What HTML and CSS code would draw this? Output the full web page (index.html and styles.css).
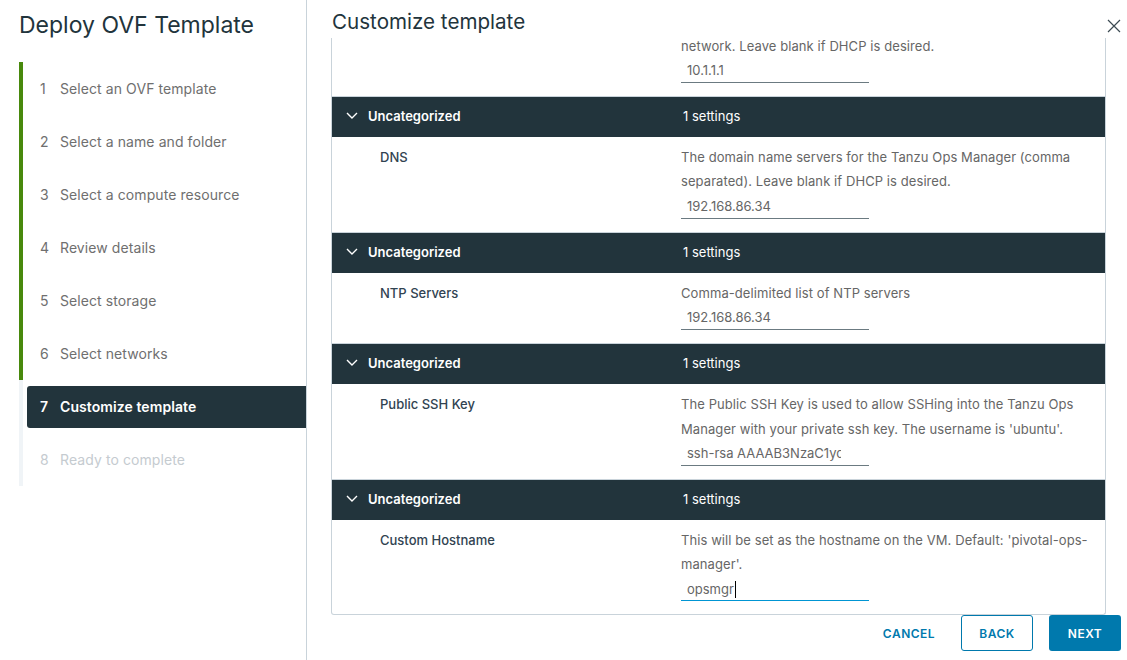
FILE: index.html
```html
<!DOCTYPE html>
<html lang="en">
<head>
  <meta charset="UTF-8">
  <title>Deploy OVF Template</title>
  <link rel="stylesheet" href="styles.css">
</head>
<body>
  <div class="wizard">
    <aside class="wizard-nav">
      <h1 class="wizard-title">Deploy OVF Template</h1>
      <ol class="steps">
        <li class="step step-done"><div class="step-item"><span class="step-num">1</span>Select an OVF template</div></li>
        <li class="step step-done"><div class="step-item"><span class="step-num">2</span>Select a name and folder</div></li>
        <li class="step step-done"><div class="step-item"><span class="step-num">3</span>Select a compute resource</div></li>
        <li class="step step-done"><div class="step-item"><span class="step-num">4</span>Review details</div></li>
        <li class="step step-done"><div class="step-item"><span class="step-num">5</span>Select storage</div></li>
        <li class="step step-done"><div class="step-item"><span class="step-num">6</span>Select networks</div></li>
        <li class="step step-active"><div class="step-item"><span class="step-num">7</span>Customize template</div></li>
        <li class="step step-disabled"><div class="step-item"><span class="step-num">8</span>Ready to complete</div></li>
      </ol>
    </aside>

    <main class="wizard-main">
      <header class="main-head">
        <h2 class="main-title">Customize template</h2>
        <svg class="close-icon" viewBox="0 0 14 14"><path d="M1 1l12 12M13 1L1 13"></path></svg>
      </header>

      <div class="panel">
        <div class="panel-scroll">
          <div class="row row-first">
            <div class="row-label"></div>
            <div class="row-body">
              <p class="row-desc">network. Leave blank if DHCP is desired.</p>
              <div class="field">10.1.1.1</div>
            </div>
          </div>

          <div class="group-head">
            <svg class="chevron" viewBox="0 0 12 8"><path d="M1 1l5 5 5-5"></path></svg>
            <span class="group-name">Uncategorized</span>
            <span class="group-count">1 settings</span>
          </div>
          <div class="row">
            <div class="row-label">DNS</div>
            <div class="row-body">
              <p class="row-desc">The domain name servers for the Tanzu Ops Manager (comma separated). Leave blank if DHCP is desired.</p>
              <div class="field">192.168.86.34</div>
            </div>
          </div>

          <div class="group-head">
            <svg class="chevron" viewBox="0 0 12 8"><path d="M1 1l5 5 5-5"></path></svg>
            <span class="group-name">Uncategorized</span>
            <span class="group-count">1 settings</span>
          </div>
          <div class="row">
            <div class="row-label">NTP Servers</div>
            <div class="row-body">
              <p class="row-desc">Comma-delimited list of NTP servers</p>
              <div class="field">192.168.86.34</div>
            </div>
          </div>

          <div class="group-head">
            <svg class="chevron" viewBox="0 0 12 8"><path d="M1 1l5 5 5-5"></path></svg>
            <span class="group-name">Uncategorized</span>
            <span class="group-count">1 settings</span>
          </div>
          <div class="row">
            <div class="row-label">Public SSH Key</div>
            <div class="row-body">
              <p class="row-desc">The Public SSH Key is used to allow SSHing into the Tanzu Ops Manager with your private ssh key. The username is 'ubuntu'.</p>
              <div class="field"><span class="field-clip">ssh-rsa AAAAB3NzaC1yc</span></div>
            </div>
          </div>

          <div class="group-head">
            <svg class="chevron" viewBox="0 0 12 8"><path d="M1 1l5 5 5-5"></path></svg>
            <span class="group-name">Uncategorized</span>
            <span class="group-count">1 settings</span>
          </div>
          <div class="row">
            <div class="row-label">Custom Hostname</div>
            <div class="row-body">
              <p class="row-desc">This will be set as the hostname on the VM. Default: 'pivotal-ops-manager'.</p>
              <div class="field field-focus">opsmgr<span class="caret"></span></div>
            </div>
          </div>
        </div>
      </div>

      <footer class="main-foot">
        <button class="btn btn-link">CANCEL</button>
        <button class="btn btn-outline">BACK</button>
        <button class="btn btn-solid">NEXT</button>
      </footer>
    </main>
  </div>
</body>
</html>
```

FILE: styles.css
```css
/* === Reset === */
*, *::before, *::after { box-sizing: border-box; }
html, body { height: 100%; }
body {
  background: #fff;
  color: #666;
  font-family: Inter, "Noto Sans", sans-serif;
  font-size: 13px;
  margin: 0;
  overflow: hidden;
}

.wizard {
  display: flex;
  height: 660px;
}

/* === Left nav === */
.wizard-nav {
  border-right: 1px solid #c9d3da;
  flex: 0 0 307px;
  padding-left: 19px;
}
.wizard-title {
  color: #22343c;
  font-size: 23px;
  font-weight: 400;
  line-height: 30px;
  margin: 0 0 22px;
  padding-top: 10px;
}
.steps {
  list-style: none;
  margin: 0;
  padding: 0;
}
.step {
  align-items: center;
  border-left: 4px solid #f0f4f7;
  color: #6f6f6f;
  display: flex;
  font-size: 14px;
  height: 53px;
  letter-spacing: .08px;
  padding-left: 4px;
}
.step-item {
  align-items: center;
  border-radius: 3px 0 0 3px;
  display: flex;
  flex: 1;
  height: 42px;
  margin-top: 1px;
  padding: 0 0 2px 13px;
}
.step-num { width: 20px; }
.step-done { border-left-color: #48890c; }
.step-active { color: #fff; font-weight: 600; }
.step-active .step-item { background: #22343c; }
.step-disabled { color: #c5cbd0; }

/* === Main === */
.wizard-main {
  display: flex;
  flex: 1;
  flex-direction: column;
  min-width: 0;
  padding: 0 6px 0 24px;
}
.main-head {
  align-items: center;
  display: flex;
  height: 38px;
  justify-content: space-between;
  padding-left: 1px;
}
.main-title {
  color: #22343c;
  font-size: 20.6px;
  font-weight: 400;
  margin: 5px 0 0;
}
.close-icon {
  fill: none;
  height: 14px;
  margin-top: 14px;
  stroke: #3c4a52;
  stroke-width: 1.2;
  width: 14px;
}

/* === Settings panel === */
.panel {
  border: 1px solid #c9d3da;
  border-radius: 0 0 3px 3px;
  border-top: 0;
  height: 577px;
  margin-right: 15px;
  overflow: hidden;
}
.panel-scroll { margin-top: -12.4px; }
.group-head {
  align-items: center;
  background: #22343c;
  border-top: 1px solid #c9d3da;
  color: #fff;
  display: flex;
  height: 41px;
  padding-bottom: 2px;
}
.chevron {
  fill: none;
  height: 8px;
  margin-left: 14px;
  stroke: #fff;
  stroke-width: 1.4;
  width: 12px;
}
.group-name {
  font-weight: 600;
  margin-left: 10px;
  width: 315px;
}
.row {
  display: flex;
  padding: 8px 0 13px;
}
.row-label {
  color: #314351;
  flex: 0 0 349px;
  font-weight: 500;
  line-height: 24px;
  padding-left: 48px;
}
.row-body { flex: 1; padding-right: 14px; }
.row-desc {
  letter-spacing: .08px;
  line-height: 24.4px;
  margin: 0;
}
.field {
  border-bottom: 1px solid #6b7a81;
  height: 25px;
  line-height: 24px;
  overflow: hidden;
  padding-left: 6px;
  position: relative;
  white-space: nowrap;
  width: 188px;
}
.field-clip {
  display: block;
  overflow: hidden;
  width: 154px;
}
.field-focus {
  border-bottom-color: #0095d3;
  height: 24px;
}
.caret {
  background: #000;
  height: 17px;
  margin-left: 1px;
  position: absolute;
  top: 4px;
  width: 1px;
}

/* === Footer === */
.main-foot {
  align-items: center;
  display: flex;
  gap: 16px;
  justify-content: flex-end;
}
.btn {
  background: none;
  border: 1px solid transparent;
  border-radius: 3px;
  color: #0079ad;
  font-family: inherit;
  font-size: 12px;
  font-weight: 600;
  height: 36px;
  letter-spacing: .5px;
  width: 72px;
}
.btn-outline { border-color: #0079ad; }
.btn-solid {
  background: #0079ad;
  color: #fff;
}
```
